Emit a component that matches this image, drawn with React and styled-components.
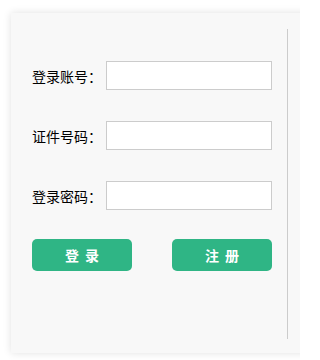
import React from 'react';
import styled, {createGlobalStyle} from "styled-components";

const GlobalStyle = createGlobalStyle`
  html, body {
    margin: 0;
    padding: 0;
    background: #fff;
  }
  body {
    font-family: "Noto Sans CJK SC", "Noto Sans", sans-serif;
  }
`

const Page = styled.div`
  width: 300px;
  height: 360px;
  overflow: hidden;
  padding: 13px 0 0 11px;
  box-sizing: border-box;
`

const Panel = styled.div`
  width: 310px;
  height: 340px;
  background: #f8f8f8;
  box-shadow: 0 0 8px rgba(0, 0, 0, 0.12);
  padding-top: 16px;
  box-sizing: border-box;
`

const FormBox = styled.div`
  width: 277px;
  height: 310px;
  border-right: 1px solid #ccc;
  box-sizing: border-box;
  padding: 32px 0 0 21px;
  display: flex;
  flex-direction: column;
  gap: 31px;
`

const Row = styled.div`
  display: flex;
  align-items: center;
  height: 29px;
`

const Label = styled.label`
  width: 74px;
  font-size: 14px;
  color: #000;
  white-space: nowrap;
`

const Input = styled.input`
  width: 166px;
  height: 29px;
  box-sizing: border-box;
  border: 1px solid #ccc;
  background: #fff;
  outline: none;
  padding: 0 6px;
  font-size: 14px;
`

const Buttons = styled.div`
  display: flex;
  gap: 40px;
  margin-top: -2px;
`

const Button = styled.button`
  width: 100px;
  height: 32px;
  border: none;
  border-radius: 5px;
  background: #2fb585;
  color: #fff;
  font-family: inherit;
  font-size: 14px;
  font-weight: bold;
  letter-spacing: 6px;
  padding: 0 0 0 6px;
  cursor: pointer;
`

const fields = [
    {label: "登录账号：", type: "text"},
    {label: "证件号码：", type: "text"},
    {label: "登录密码：", type: "password"},
]

const App = () => {
    return (
        <Page>
            <GlobalStyle/>
            <Panel>
                <FormBox>
                    {fields.map(f => (
                        <Row key={f.label}>
                            <Label>{f.label}</Label>
                            <Input type={f.type}/>
                        </Row>
                    ))}
                    <Buttons>
                        <Button>登录</Button>
                        <Button>注册</Button>
                    </Buttons>
                </FormBox>
            </Panel>
        </Page>
    );
};

export default App;
